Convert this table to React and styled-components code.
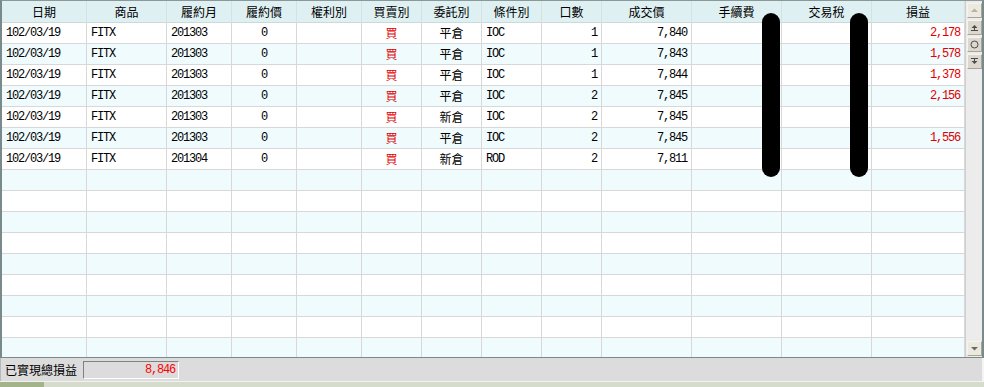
import React from 'react';
import styled, { createGlobalStyle } from 'styled-components';

const Global = createGlobalStyle`
  body {
    margin: 0;
    background: #ffffff;
  }
`

const Window = styled.div`
  display: flex;
  flex-direction: column;
  width: 984px;
  height: 387px;
  overflow: hidden;
  background: #dcdcdc;
`

const Frame = styled.div`
  position: relative;
  display: flex;
  height: 358px;
  box-sizing: border-box;
  border-top: 1px solid #8a9898;
  border-left: 2px solid #7a8a8a;
  border-right: 2px solid #7a8a8a;
  border-bottom: 1px solid #7a8a8a;
  background: #ffffff;
`

const Table = styled.div`
  display: grid;
  grid-template-columns: 85px 80px 65px 65px 65px 60px 60px 60px 60px 90px 90px 90px 93px;
  grid-auto-rows: 21px;
  grid-template-rows: 22px;
  width: 963px;
  overflow: hidden;
  align-content: start;
`

const Head = styled.div`
  display: flex;
  align-items: center;
  justify-content: center;
  box-sizing: border-box;
  background: #dff0f3;
  border-right: 1px solid #d4e2e4;
  border-bottom: 1px solid #cfd8d8;
  font-family: "Noto Sans CJK TC", sans-serif;
  font-size: 12px;
  line-height: 1;
  color: #000;
`

const Cell = styled.div`
  display: flex;
  align-items: center;
  justify-content: ${p => p.$align === 'right' ? 'flex-end' : p.$align === 'center' ? 'center' : 'flex-start'};
  box-sizing: border-box;
  padding: 0 4px 0 4px;
  background: ${p => p.$alt ? '#effbfd' : '#ffffff'};
  border-right: 1px solid #d8d8d8;
  border-bottom: 1px solid #d8d8d8;
  font-family: ${p => p.$cjk ? '"Noto Sans CJK TC", sans-serif' : '"Liberation Mono", monospace'};
  font-size: 12px;
  line-height: 1;
  letter-spacing: ${p => p.$cjk ? '0' : '-1.2px'};
  color: ${p => p.$red ? '#e00000' : '#000'};
  white-space: nowrap;
`

const Redact = styled.div`
  position: absolute;
  top: 12px;
  width: 18px;
  height: 164px;
  border-radius: 9px;
  background: #000;
`

const Scroll = styled.div`
  display: flex;
  flex-direction: column;
  justify-content: space-between;
  width: 17px;
  box-sizing: border-box;
  border-left: 1px solid #d0d0d0;
  background: #ececec;
  padding: 2px 0 1px 1px;
`

const BtnGroup = styled.div`
  display: flex;
  flex-direction: column;
  gap: 2px;
`

const Btn = styled.div`
  display: flex;
  align-items: center;
  justify-content: center;
  width: 15px;
  height: 15px;
  box-sizing: border-box;
  background: ${p => p.$light ? '#ece9df' : '#dcd8ce'};
  border: 1px solid;
  border-color: #f6f4ee #a8a49a #a8a49a #f6f4ee;
`

const Footer = styled.div`
  display: flex;
  align-items: center;
  gap: 6px;
  height: 24px;
  padding-left: 4px;
  background: #dcdcdc;
  border-left: 1px solid #b8b8b8;
  border-right: 2px solid #f4f4f4;
`

const Label = styled.span`
  font-family: "Noto Sans CJK TC", sans-serif;
  font-size: 12px;
  line-height: 1;
  color: #000;
`

const ValueBox = styled.div`
  display: flex;
  align-items: center;
  justify-content: flex-end;
  width: 96px;
  height: 18px;
  box-sizing: border-box;
  padding-right: 3px;
  border: 1px solid;
  border-color: #808080 #ffffff #ffffff #808080;
  font-family: "Liberation Mono", monospace;
  font-size: 12px;
  letter-spacing: -1.2px;
  color: #ff0000;
`

const Strip = styled.div`
  display: flex;
  height: 5px;
  border-top: 1px solid #f2f2f2;
  background: #d6dccb;
`

const StripFill = styled.div`
  width: 44px;
  background: #a3b48a;
`

const headers = ['日期', '商品', '履約月', '履約價', '權利別', '買賣別', '委託別', '條件別', '口數', '成交價', '手續費', '交易稅', '損益']

const rows = [
  ['平倉', 'IOC', '1', '7,840', '2,178', '201303'],
  ['平倉', 'IOC', '1', '7,843', '1,578', '201303'],
  ['平倉', 'IOC', '1', '7,844', '1,378', '201303'],
  ['平倉', 'IOC', '2', '7,845', '2,156', '201303'],
  ['新倉', 'IOC', '2', '7,845', '', '201303'],
  ['平倉', 'IOC', '2', '7,845', '1,556', '201303'],
  ['新倉', 'ROD', '2', '7,811', '', '201304'],
]

const Glyph = ({ children, color = '#4a4a4a' }) => (
  <svg width="9" height="9" viewBox="0 0 9 9" fill={color} stroke={color}>{children}</svg>
)

function DataRow({ row, alt }) {
  const [kind, cond, qty, price, pnl, month] = row
  return (
    <>
      <Cell $alt={alt}>102/03/19</Cell>
      <Cell $alt={alt}>FITX</Cell>
      <Cell $alt={alt}>{month}</Cell>
      <Cell $alt={alt} $align="center">0</Cell>
      <Cell $alt={alt} />
      <Cell $alt={alt} $align="center" $cjk $red>買</Cell>
      <Cell $alt={alt} $align="center" $cjk>{kind}</Cell>
      <Cell $alt={alt}>{cond}</Cell>
      <Cell $alt={alt} $align="right">{qty}</Cell>
      <Cell $alt={alt} $align="right">{price}</Cell>
      <Cell $alt={alt} />
      <Cell $alt={alt} />
      <Cell $alt={alt} $align="right" $red>{pnl}</Cell>
    </>
  )
}

function EmptyRow({ alt }) {
  return headers.map((h) => <Cell key={h} $alt={alt} />)
}

export default function App() {
  const empties = Array.from({ length: 9 }, (_, i) => i + 7)

  return (
    <>
      <Global />
      <Window>
        <Frame>
          <Table>
            {headers.map((h) => <Head key={h}>{h}</Head>)}
            {rows.map((r, i) => <DataRow key={i} row={r} alt={i % 2 === 1} />)}
            {empties.map((i) => <EmptyRow key={i} alt={i % 2 === 1} />)}
          </Table>
          <Redact style={{ left: 760 }} />
          <Redact style={{ left: 848 }} />
          <Scroll>
            <BtnGroup>
              <Btn $light>
                <Glyph color="#b4b2aa"><path d="M1 6 L4.5 2.5 L8 6 Z" stroke="none" /></Glyph>
              </Btn>
              <Btn>
                <Glyph>
                  <path d="M1.5 5 L4.5 2 L7.5 5 Z" stroke="none" />
                  <path d="M1 7.5 H8" fill="none" strokeWidth="1" />
                  <path d="M4.5 5 V7" fill="none" strokeWidth="1" />
                </Glyph>
              </Btn>
              <Btn>
                <Glyph><circle cx="4.5" cy="4.5" r="3.5" fill="none" strokeWidth="1" /></Glyph>
              </Btn>
              <Btn>
                <Glyph>
                  <path d="M1 1.5 H8" fill="none" strokeWidth="1" />
                  <path d="M4.5 2 V4" fill="none" strokeWidth="1" />
                  <path d="M1.5 4 L4.5 7 L7.5 4 Z" stroke="none" />
                </Glyph>
              </Btn>
            </BtnGroup>
            <Btn $light>
              <Glyph color="#6a6a6a"><path d="M1 3 L4.5 6.5 L8 3 Z" stroke="none" /></Glyph>
            </Btn>
          </Scroll>
        </Frame>
        <Footer>
          <Label>已實現總損益</Label>
          <ValueBox>8,846</ValueBox>
        </Footer>
        <Strip><StripFill /></Strip>
      </Window>
    </>
  )
}
